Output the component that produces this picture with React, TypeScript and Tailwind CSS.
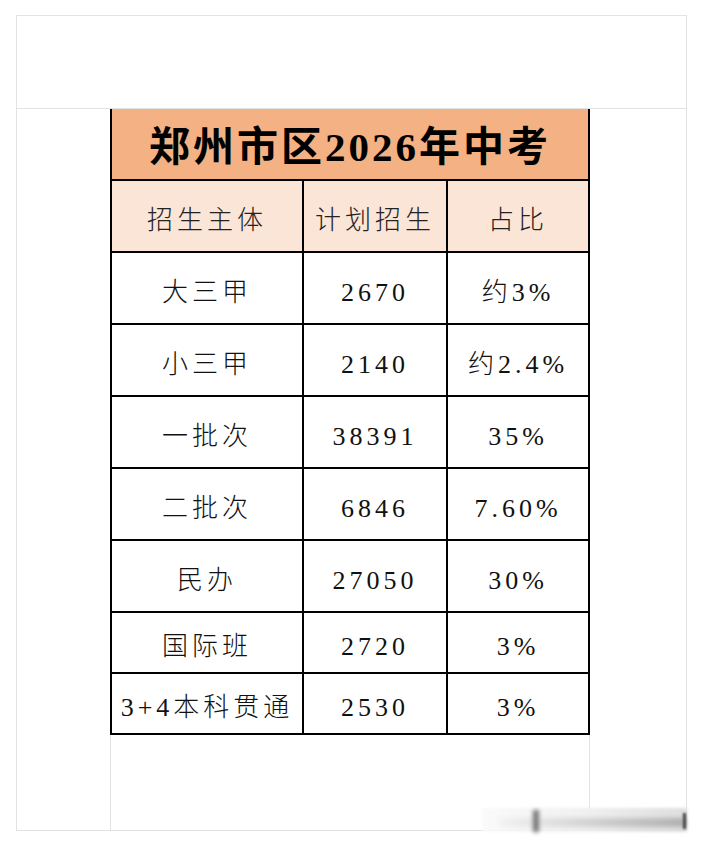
import React from 'react'

const rows = [
  { name: '大三甲', plan: '2670', ratio: '约3%', h: 'h-[72px]' },
  { name: '小三甲', plan: '2140', ratio: '约2.4%', h: 'h-[72px]' },
  { name: '一批次', plan: '38391', ratio: '35%', h: 'h-[72px]' },
  { name: '二批次', plan: '6846', ratio: '7.60%', h: 'h-[72px]' },
  { name: '民办', plan: '27050', ratio: '30%', h: 'h-[72px]' },
  { name: '国际班', plan: '2720', ratio: '3%', h: 'h-[61px]' },
  { name: '3+4本科贯通', plan: '2530', ratio: '3%', h: 'h-[59px]' },
]

function Row({ cells, className }: { cells: string[]; className: string }) {
  return (
    <div className={`flex ${className}`}>
      <div className="w-[192px] border-r-2 border-black flex items-center justify-center pt-[8px]">
        {cells[0]}
      </div>
      <div className="w-[144px] border-r-2 border-black flex items-center justify-center pt-[8px]">
        {cells[1]}
      </div>
      <div className="flex-1 flex items-center justify-center pt-[8px]">{cells[2]}</div>
    </div>
  )
}

export default function App() {
  return (
    <div className="relative min-h-[846px] w-[702px] bg-white pt-[15px] [font-family:'Liberation_Serif','Noto_Sans_CJK_SC',serif]">
      {/* sheet frame */}
      <div className="ml-[16px] w-[671px] h-[816px] border border-[#e3e3e3] flex flex-col">
        <div className="h-[93px] border-b border-[#e3e3e3]" />

        {/* table */}
        <div className="ml-[93px] w-[480px] border-x-2 border-b-2 border-black text-[26px] font-light tracking-[4px] text-[#111]">
          <div className="h-[72px] bg-[#f4b183] border-b-2 border-black flex items-center justify-center pt-[8px] text-[41px] font-bold tracking-[3px] text-black">
            郑州市区2026年中考
          </div>
          <Row
            cells={['招生主体', '计划招生', '占比']}
            className="h-[72px] bg-[#fbe5d6] border-b-2 border-black text-[#222]"
          />
          {rows.map((r, i) => (
            <Row
              key={r.name}
              cells={[r.name, r.plan, r.ratio]}
              className={`${r.h} ${i < rows.length - 1 ? 'border-b-2 border-black' : ''}`}
            />
          ))}
        </div>

        <div className="flex-1 ml-[93px] w-[480px] border-x border-[#e3e3e3]" />
      </div>

      {/* blurred watermark strip */}
      <div className="absolute left-[482px] top-[808px] h-[24px] w-[205px] bg-linear-to-r from-[#fafafa] via-[#f0f0f0] to-[#dedede] blur-[1.5px]" />
      <div className="absolute left-[500px] top-[818px] h-[9px] w-[186px] bg-linear-to-r from-[#f2f2f2] to-[#b0b0b0] blur-[2px]" />
      <div className="absolute left-[533px] top-[810px] h-[22px] w-[6px] bg-[#777] blur-[2px]" />
      <div className="absolute left-[683px] top-[813px] h-[16px] w-[3px] bg-[#444] blur-[1px]" />
    </div>
  )
}
